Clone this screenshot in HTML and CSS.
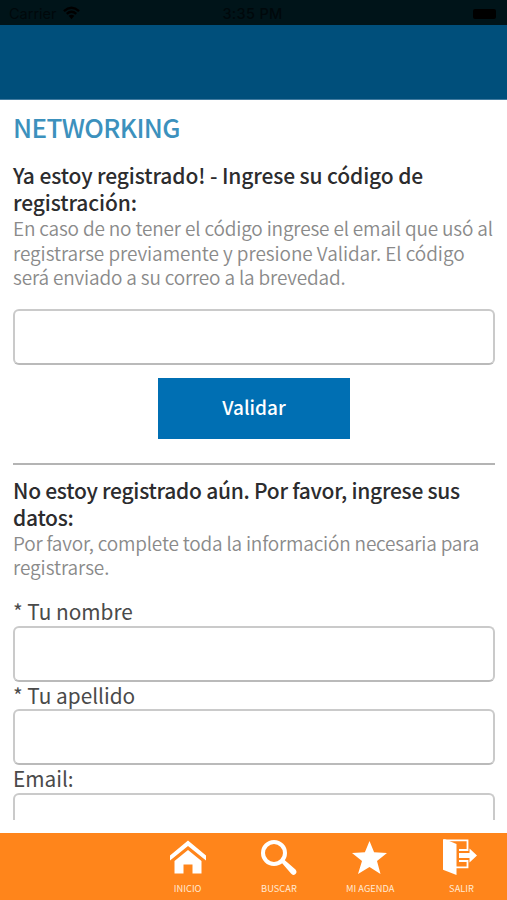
FILE: index.html
```html
<!DOCTYPE html>
<html lang="es">
<head>
<meta charset="utf-8">
<title>Networking</title>
<link rel="stylesheet" href="styles.css">
</head>
<body>
<div class="status">
  <span class="carrier">Carrier
    <svg class="wifi" viewBox="0 0 18 14" width="17" height="14"><path d="M1 5Q9-2 17 5M4 8Q9 3.500 14 8" fill="none" stroke="#000" stroke-width="2.600"/><path d="M6 10Q9 7.500 12 10L9 13.500Z"/></svg>
  </span>
  <span class="clock">3:35 PM</span>
  <span class="battery"></span>
</div>
<header class="banner"></header>
<main class="content">
  <h1>NETWORKING</h1>
  <section>
    <h2>Ya estoy registrado! - Ingrese su código de<br>registración:</h2>
    <p><span class="line">En caso de no tener el código ingrese el email que usó al</span><span class="line loose">registrarse previamente y presione Validar. El código</span><span class="line">será enviado a su correo a la brevedad.</span></p>
    <input class="field code" type="text" aria-label="Código">
    <button class="validate" type="button">Validar</button>
  </section>
  <hr>
  <section>
    <h2 class="new">No estoy registrado aún. Por favor, ingrese sus<br>datos:</h2>
    <p><span class="line tight">Por favor, complete toda la información necesaria para</span><span class="line loose">registrarse.</span></p>
    <form class="form">
      <label for="n">* Tu nombre</label>
      <input class="field" id="n" type="text">
      <label for="a">* Tu apellido</label>
      <input class="field" id="a" type="text">
      <label for="e">Email:</label>
      <input class="field" id="e" type="text">
    </form>
  </section>
</main>
<nav class="tabs">
  <a class="tab"><svg width="38" height="38" viewBox="0 0 38 38" fill="#fff"><path d="M1 17.500L19 2.500L37 17.500V22.500L19 8L1 22.500Z"/><path d="M5.500 23L19 12L32.500 23V35.500H23.500V26.500H14.500V35.500H5.500Z"/></svg><span>INICIO</span></a>
  <a class="tab"><svg width="38" height="38" viewBox="0 0 38 38"><circle cx="14" cy="15" r="11" fill="none" stroke="#fff" stroke-width="4"/><path d="M21.500 24.500L24 21.500L35.500 31.500Q37.500 34 35.500 36Q33 38 31 35.500Z" fill="#fff"/></svg><span>BUSCAR</span></a>
  <a class="tab"><svg width="38" height="38" viewBox="0 0 38 38" fill="#fff"><path d="M18.500 3L23.100 14.200L36 15L26 23L29.500 36L18.500 29L7 36L11 23L1 15L13.900 14.200Z"/></svg><span>MI AGENDA</span></a>
  <a class="tab"><svg width="38" height="38" viewBox="0 0 38 38" fill="none"><path d="M1 2.300H24.500V12H16M16 23H24.500V29.300H13" stroke="#fff" stroke-width="1.800"/><path d="M0 1.300H2L13.500 6V37L0 31.800Z" fill="#fff"/><path d="M16 15H26.500V10.500L34 17.500L26.500 24.500V20H16Z" fill="#fff"/></svg><span>SALIR</span></a>
</nav>
</body>
</html>
```
FILE: styles.css
```css
* { box-sizing: border-box; }
body {
  margin: 0;
  height: 900px;
  display: flex;
  flex-direction: column;
  overflow: hidden;
  background: #fff;
  font-family: "Noto Sans CJK JP", "Noto Sans", sans-serif;
}
.status {
  flex: none;
  height: 25px;
  padding: 3px 11px 0 9px;
  display: grid;
  grid-template-columns: 1fr auto 1fr;
  align-items: center;
  background: #001419;
  color: #00080b;
  font: 14.5px/20px Inter, sans-serif;
}
.carrier { display: flex; align-items: center; gap: 6px; }
.wifi { margin-top: -2px; }
.clock { font-weight: 500; letter-spacing: .3px; }
.battery { justify-self: end; width: 23px; height: 10px; border-radius: 2px; background: #000; }
.banner { flex: none; height: 75px; background: #004f7b; border-bottom: 1px solid #427b9f; }
.content { flex: none; height: 720px; padding: 12px 12px 0 13px; overflow: hidden; }
h1 {
  margin: 0;
  height: 50.400px;
  font-size: 26px;
  font-weight: 500;
  line-height: 30px;
  letter-spacing: -.6px;
  color: #3c91bd;
}
h2 {
  margin: 0;
  font-size: 21px;
  font-weight: 500;
  line-height: 27px;
  letter-spacing: -.12px;
  color: #2c2c2e;
  white-space: nowrap;
}
.new { letter-spacing: -.27px; }
p { margin: -.3px 0 0; font-size: 19px; font-weight: 350; line-height: 24.500px; letter-spacing: -.17px; color: #8a8a8a; }
.line { display: block; white-space: nowrap; }
.loose { letter-spacing: -.07px; }
.tight { letter-spacing: -.2px; }
.field {
  display: block;
  width: 482px;
  height: 56px;
  padding: 0 12px;
  border: 2px solid #cacaca;
  border-bottom-color: #bababa;
  border-radius: 6px;
  background: #fff;
  font: inherit;
}
.code { margin-top: 19.100px; }
.validate {
  display: block;
  width: 192px;
  height: 61px;
  margin: 13px 0 0 145px;
  padding: 0 0 3px;
  border: 0;
  background: #006fb3;
  color: #fff;
  font-family: inherit;
  font-size: 19px;
  font-weight: 500;
}
hr { height: 2px; margin: 24.500px 0 11.900px; border: 0; background: #b4b4b4; }
.form { margin-top: 17.900px; }
label { display: block; padding-bottom: 1px; font-size: 20.800px; line-height: 26.900px; color: #4a4a4a; }
.tabs {
  flex: none;
  display: flex;
  height: 67px;
  margin-top: 13px;
  padding-left: 142px;
  background: #ff851b;
}
.tab { width: 91.300px; flex: none; display: flex; flex-direction: column; align-items: center; padding-top: 5px; }
.tab span { margin-top: 6px; font-size: 9.300px; line-height: 13px; color: #ffe9d4; }
```
